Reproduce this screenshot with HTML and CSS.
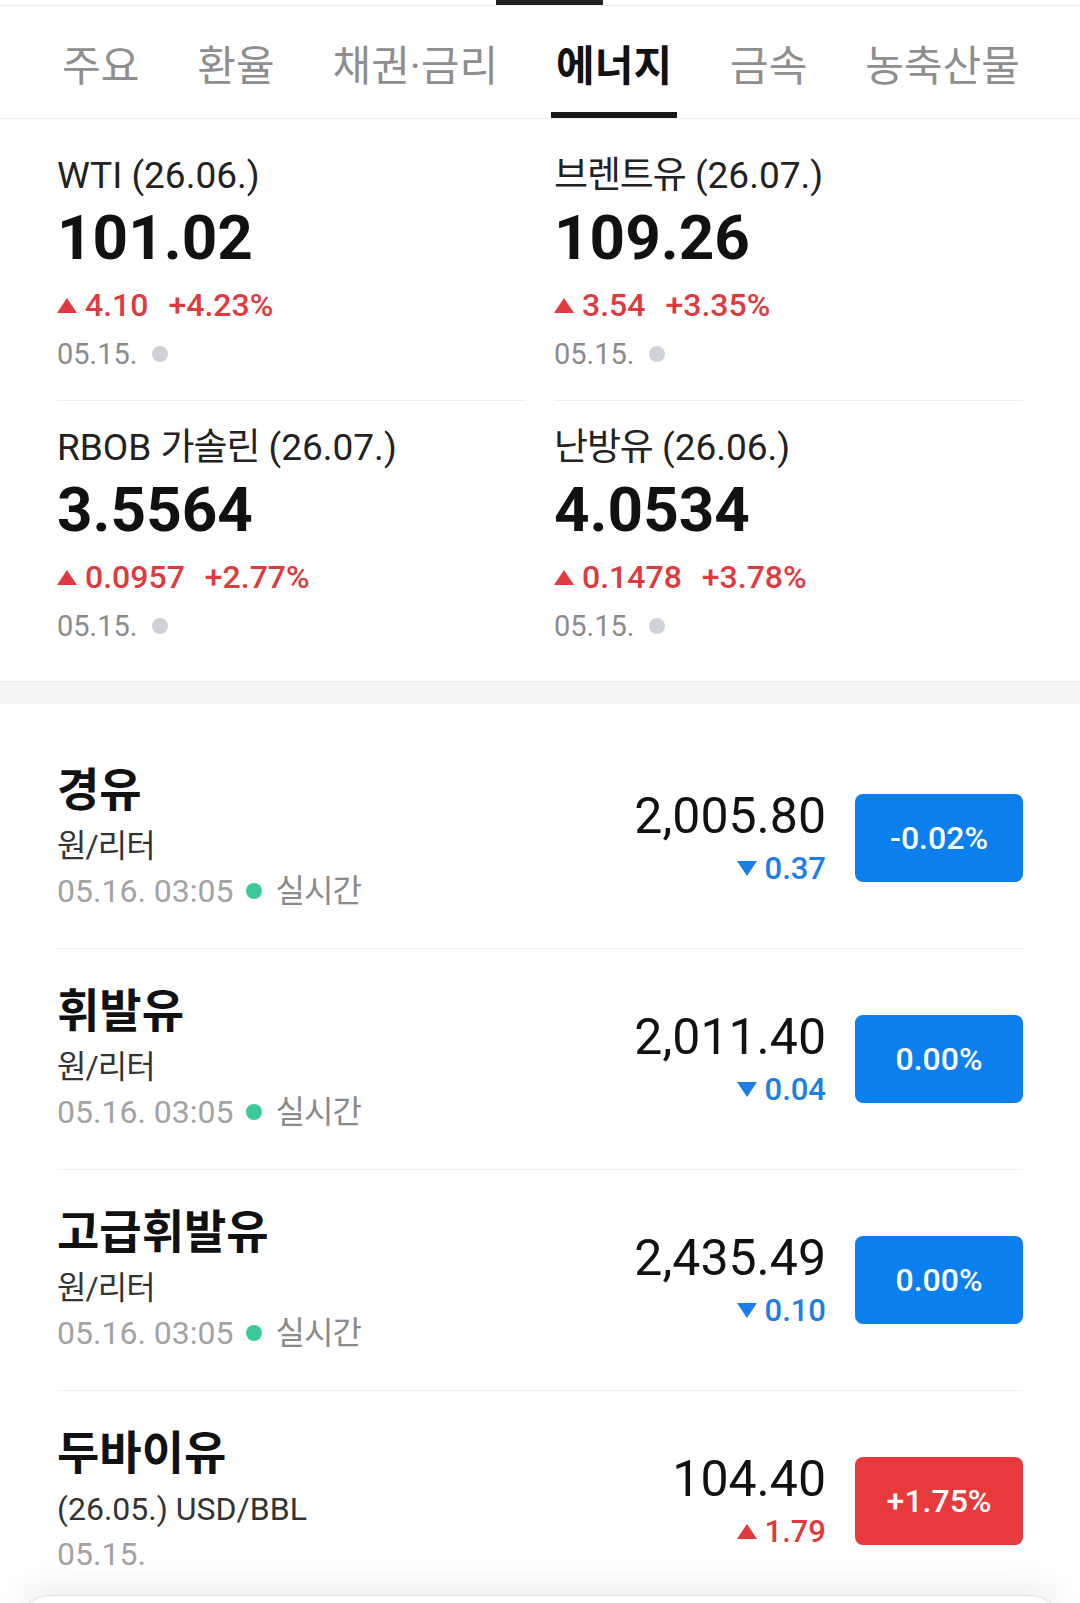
FILE: index.html
```html
<!DOCTYPE html>
<html lang="ko">
<head>
    <meta charset="UTF-8">
    <meta name="viewport" content="width=device-width, initial-scale=1.0">
    <title>에너지 시세</title>
    <link rel="stylesheet" href="styles.css">
</head>
<body>
    <div class="top-strip"><span class="top-strip-bar"></span></div>

    <nav class="tabs">
        <a class="tab">주요</a>
        <a class="tab">환율</a>
        <a class="tab">채권·금리</a>
        <a class="tab active">에너지</a>
        <a class="tab">금속</a>
        <a class="tab">농축산물</a>
    </nav>

    <section class="futures">
        <div class="future">
            <div class="future-name">WTI (26.06.)</div>
            <div class="future-price">101.02</div>
            <div class="future-change">
                <svg class="tri" viewBox="0 0 20 15"><polygon points="10,0 20,15 0,15"/></svg>
                <span>4.10</span><span class="pct">+4.23%</span>
            </div>
            <div class="future-date">05.15.<span class="dot"></span></div>
        </div>
        <div class="future">
            <div class="future-name"><span class="ko">브렌트유</span> (26.07.)</div>
            <div class="future-price">109.26</div>
            <div class="future-change">
                <svg class="tri" viewBox="0 0 20 15"><polygon points="10,0 20,15 0,15"/></svg>
                <span>3.54</span><span class="pct">+3.35%</span>
            </div>
            <div class="future-date">05.15.<span class="dot"></span></div>
        </div>
        <div class="future">
            <div class="future-name">RBOB <span class="ko">가솔린</span> (26.07.)</div>
            <div class="future-price">3.5564</div>
            <div class="future-change">
                <svg class="tri" viewBox="0 0 20 15"><polygon points="10,0 20,15 0,15"/></svg>
                <span>0.0957</span><span class="pct">+2.77%</span>
            </div>
            <div class="future-date">05.15.<span class="dot"></span></div>
        </div>
        <div class="future">
            <div class="future-name"><span class="ko">난방유</span> (26.06.)</div>
            <div class="future-price">4.0534</div>
            <div class="future-change">
                <svg class="tri" viewBox="0 0 20 15"><polygon points="10,0 20,15 0,15"/></svg>
                <span>0.1478</span><span class="pct">+3.78%</span>
            </div>
            <div class="future-date">05.15.<span class="dot"></span></div>
        </div>
    </section>

    <div class="band"></div>

    <ul class="list">
        <li class="item">
            <div class="item-info">
                <div class="item-name">경유</div>
                <div class="item-unit"><span class="ko">원/리터</span></div>
                <div class="item-date">05.16. 03:05<span class="live-dot"></span><span class="live ko">실시간</span></div>
            </div>
            <div class="item-quote">
                <div class="item-price">2,005.80</div>
                <div class="item-change fall">
                    <svg class="tri" viewBox="0 0 20 15"><polygon points="0,0 20,0 10,15"/></svg>0.37
                </div>
            </div>
            <div class="badge badge-fall">-0.02%</div>
        </li>
        <li class="item">
            <div class="item-info">
                <div class="item-name">휘발유</div>
                <div class="item-unit"><span class="ko">원/리터</span></div>
                <div class="item-date">05.16. 03:05<span class="live-dot"></span><span class="live ko">실시간</span></div>
            </div>
            <div class="item-quote">
                <div class="item-price">2,011.40</div>
                <div class="item-change fall">
                    <svg class="tri" viewBox="0 0 20 15"><polygon points="0,0 20,0 10,15"/></svg>0.04
                </div>
            </div>
            <div class="badge badge-fall">0.00%</div>
        </li>
        <li class="item">
            <div class="item-info">
                <div class="item-name">고급휘발유</div>
                <div class="item-unit"><span class="ko">원/리터</span></div>
                <div class="item-date">05.16. 03:05<span class="live-dot"></span><span class="live ko">실시간</span></div>
            </div>
            <div class="item-quote">
                <div class="item-price">2,435.49</div>
                <div class="item-change fall">
                    <svg class="tri" viewBox="0 0 20 15"><polygon points="0,0 20,0 10,15"/></svg>0.10
                </div>
            </div>
            <div class="badge badge-fall">0.00%</div>
        </li>
        <li class="item">
            <div class="item-info">
                <div class="item-name">두바이유</div>
                <div class="item-unit">(26.05.) USD/BBL</div>
                <div class="item-date">05.15.</div>
            </div>
            <div class="item-quote">
                <div class="item-price">104.40</div>
                <div class="item-change rise">
                    <svg class="tri" viewBox="0 0 20 15"><polygon points="10,0 20,15 0,15"/></svg>1.79
                </div>
            </div>
            <div class="badge badge-rise">+1.75%</div>
        </li>
    </ul>

    <div class="sheet"></div>
</body>
</html>
```

FILE: styles.css
```css
body {
    margin: 0;
    height: 1603px;
    overflow: hidden;
    background: #fff;
    color: #111;
    font-family: Roboto, "Noto Sans CJK KR", sans-serif;
}
.ko {
    letter-spacing: -0.03em;
}

/* scrolled-away bar above the tabs */
.top-strip {
    display: flex;
    height: 5px;
    border-bottom: 1px solid #eeeeee;
}
.top-strip-bar {
    width: 107px;
    margin-left: 496px;
    background: #222;
}

/* tabs */
.tabs {
    display: flex;
    gap: 48px;
    padding: 0 57px;
    border-bottom: 1px solid #eeeeee;
}
.tab {
    display: flex;
    align-items: center;
    box-sizing: border-box;
    height: 112px;
    padding: 6px 5px 0;
    border-bottom: 6px solid transparent;
    font-size: 42px;
    color: #8e8e8e;
    white-space: nowrap;
}
.tab.active {
    color: #111;
    font-weight: 700;
    border-bottom-color: #1a1a1a;
}

/* futures grid */
.futures {
    display: grid;
    grid-template-columns: 1fr 1fr;
    column-gap: 28px;
    padding: 10px 57px 9px;
}
.future {
    padding: 24px 0 26px;
}
.future:nth-child(-n+2) {
    border-bottom: 1px solid #eeeeee;
}
.future-name {
    font-size: 37px;
    line-height: 46px;
    color: #222;
}
.future-price {
    margin-top: 3px;
    font-size: 62px;
    font-weight: 700;
    line-height: 72px;
}
.future-change {
    display: flex;
    align-items: center;
    height: 40px;
    margin-top: 11px;
    font-size: 32px;
    font-weight: 500;
    color: #e0393e;
}
.tri {
    width: 20px;
    height: 15px;
    margin-right: 8px;
    fill: currentColor;
}
.pct {
    margin-left: 20px;
}
.future-date {
    display: flex;
    align-items: center;
    margin-top: 9px;
    font-size: 29px;
    line-height: 40px;
    color: #8c8c8c;
}
.dot {
    width: 16px;
    height: 16px;
    margin-left: 14px;
    border-radius: 50%;
    background: #cfd3d9;
}

.band {
    height: 22px;
    border-top: 1px solid #eaecef;
    background: #f2f4f6;
}

/* price list */
.list {
    list-style: none;
    margin: 0;
    padding: 24px 57px 0;
}
.item {
    display: flex;
    align-items: center;
    padding: 36px 0 37px;
    border-bottom: 1px solid #eeeeee;
}
.item-info {
    flex: 1;
}
.item-name {
    font-size: 46px;
    font-weight: 700;
    line-height: 52px;
}
.item-unit {
    margin-top: 10px;
    font-size: 32px;
    line-height: 40px;
    color: #333;
}
.item-date {
    display: flex;
    align-items: center;
    margin-top: 5px;
    font-size: 32px;
    line-height: 40px;
    color: #a3a3a3;
}
.live-dot {
    width: 16px;
    height: 16px;
    margin: 0 13px;
    border-radius: 50%;
    background: #3cc89c;
}
.live {
    color: #8a8a8a;
}
.item-quote {
    text-align: right;
}
.item-price {
    font-size: 50px;
    line-height: 58px;
    color: #111;
}
.item-change {
    display: flex;
    justify-content: flex-end;
    align-items: center;
    margin-top: 4px;
    font-size: 31px;
    font-weight: 500;
    line-height: 40px;
}
.rise {
    color: #e0393e;
}
.fall {
    color: #1b7fe3;
}
.badge {
    display: flex;
    align-items: center;
    justify-content: center;
    width: 168px;
    height: 88px;
    margin-left: 29px;
    border-radius: 8px;
    color: #fff;
    font-size: 32px;
    font-weight: 500;
}
.badge-fall {
    background: #0b7fee;
}
.badge-rise {
    background: #e8393c;
}

/* bottom sheet peeking in */
.sheet {
    position: fixed;
    left: 18px;
    right: 18px;
    top: 1595px;
    height: 60px;
    border: 1px solid #e2e2e2;
    border-radius: 32px 32px 0 0;
    background: #fff;
    box-shadow: 0 -14px 30px rgba(0, 0, 0, 0.06);
}
```
